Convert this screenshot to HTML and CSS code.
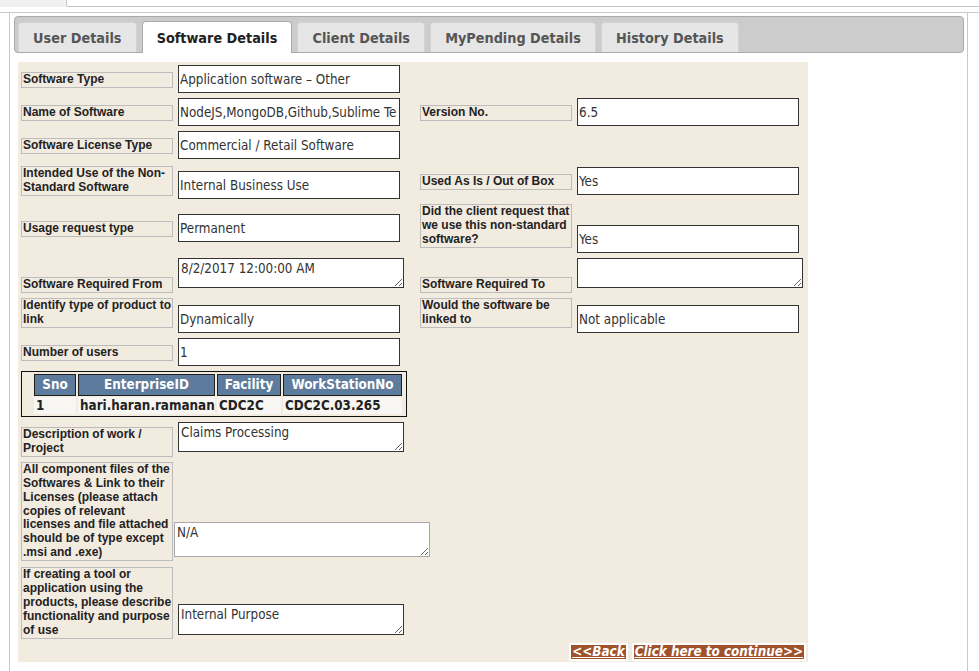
FILE: index.html
```html
<!DOCTYPE html>
<html>
<head>
<meta charset="utf-8">
<title>Software Details</title>
<link rel="stylesheet" href="styles.css">
</head>
<body>
<div class="chrome">
  <div class="chrome-left"></div>
  <div class="urlbar"></div>
</div>
<div class="frame">
  <ul class="tabs">
    <li class="tab">User Details</li>
    <li class="tab active">Software Details</li>
    <li class="tab">Client Details</li>
    <li class="tab">MyPending Details</li>
    <li class="tab">History Details</li>
  </ul>
  <div class="panel">
    <div class="grid">
      <div class="lbl m9">Software Type</div>
      <div class="fld m2">Application software – Other</div>
      <div></div><div></div>

      <div class="lbl m9">Name of Software</div>
      <div class="fld m2">NodeJS,MongoDB,Github,Sublime Te</div>
      <div class="lbl m9">Version No.</div>
      <div class="fld m2">6.5</div>

      <div class="lbl m9">Software License Type</div>
      <div class="fld m2">Commercial / Retail Software</div>
      <div></div><div></div>

      <div class="lbl m4">Intended Use of the Non-Standard Software</div>
      <div class="fld m9">Internal Business Use</div>
      <div class="lbl m12">Used As Is / Out of Box</div>
      <div class="fld m5">Yes</div>

      <div class="lbl m20">Usage request type</div>
      <div class="fld m13">Permanent</div>
      <div class="lbl m3">Did the client request that we use this non-standard software?</div>
      <div class="fld m24">Yes</div>

      <div class="lbl m21">Software Required From</div>
      <textarea class="ta m2" readonly>8/2/2017 12:00:00 AM</textarea>
      <div class="lbl m21">Software Required To</div>
      <textarea class="ta m2" readonly></textarea>

      <div class="lbl m2">Identify type of product to link</div>
      <div class="fld m9">Dynamically</div>
      <div class="lbl m2">Would the software be linked to</div>
      <div class="fld m9">Not applicable</div>

      <div class="lbl m9">Number of users</div>
      <div class="fld m2">1</div>
      <div></div><div></div>
    </div>

    <div class="users">
      <div class="ugrid">
        <div class="th">Sno</div>
        <div class="th">EnterpriseID</div>
        <div class="th">Facility</div>
        <div class="th">WorkStationNo</div>
        <div class="td">1</div>
        <div class="td">hari.haran.ramanan</div>
        <div class="td">CDC2C</div>
        <div class="td">CDC2C.03.265</div>
      </div>
    </div>

    <div class="row">
      <div class="lbl m10">Description of work / Project</div>
      <textarea class="ta m5 gap" readonly>Claims Processing</textarea>
    </div>

    <div class="row">
      <div class="lbl m5">All component files of the Softwares &amp; Link to their Licenses (please attach copies of relevant licenses and file attached should be of type except .msi and .exe)</div>
      <textarea class="ta wide end" readonly>N/A</textarea>
    </div>

    <div class="row">
      <div class="lbl m6">If creating a tool or application using the products, please describe functionality and purpose of use</div>
      <textarea class="ta tall gap end" readonly>Internal Purpose</textarea>
    </div>

    <div class="actions">
      <a class="btn" href="#">&lt;&lt;Back</a>
      <a class="btn" href="#">Click here to continue&gt;&gt;</a>
    </div>
  </div>
</div>
</body>
</html>
```

FILE: styles.css
```css
* { box-sizing: border-box; }

html, body {
  margin: 0;
  padding: 0;
  background: #ffffff;
}

body {
  font-family: "Liberation Sans", Arial, sans-serif;
  overflow: hidden;
}

/* browser strip remnant */
.chrome {
  display: flex;
  height: 13px;
  border-bottom: 1px solid #c9c9c9;
}
.chrome-left {
  width: 66px;
  height: 7px;
  background: #f1f1f1;
}
.urlbar {
  flex: 1;
  height: 7px;
  border-left: 1px solid #c4c4c4;
  border-bottom: 1px solid #c4c4c4;
  border-bottom-left-radius: 2px;
  background: #ffffff;
}

/* tab widget frame */
.frame {
  margin-left: 9px;
  width: 959px;
  height: 658px;
  border-left: 1px solid #c9c9c9;
  border-right: 1px solid #c9c9c9;
  padding: 3px 3px 0 4px;
}

.tabs {
  list-style: none;
  margin: 0;
  display: flex;
  align-items: flex-end;
  height: 37px;
  padding: 5px 0 0 3px;
  background: #cccccc;
  border: 1px solid #aaaaaa;
  border-radius: 4px;
}
.tab {
  height: 30px;
  padding: 1px 14.1px 0;
  margin-right: 5px;
  border: 1px solid #d3d3d3;
  border-bottom: 0;
  border-radius: 4px 4px 0 0;
  background: #e6e6e6;
  color: #555555;
  font-family: "DejaVu Sans Condensed", "DejaVu Sans", sans-serif;
  font-stretch: condensed;
  font-weight: bold;
  font-size: 14.3px;
  line-height: 28px;
  white-space: nowrap;
}
.tab.active {
  height: 32px;
  margin-bottom: -1px;
  background: #ffffff;
  border-color: #aaaaaa;
  color: #212121;
  line-height: 30px;
}

/* form panel */
.panel {
  margin: 9px 0 0 4px;
  width: 790px;
  height: 600px;
  background: #f2ebe0;
  padding: 1px 3px 0 3px;
}

.grid {
  display: grid;
  grid-template-columns: 152px 237px 152px 1fr;
  column-gap: 5px;
  grid-template-rows: 33px 33px 33px 39px 55px 40px 40px 33px;
  align-items: start;
}

.lbl {
  width: 152px;
  border: 1px solid #bcbcbc;
  padding: 0 0 0 1px;
  font-family: "Liberation Sans", Arial, sans-serif;
  font-weight: bold;
  font-size: 12px;
  line-height: 13.9px;
  color: #222222;
}

.fld {
  width: 222px;
  height: 28px;
  border: 1px solid #333333;
  background: #ffffff;
  padding: 0 1px;
  font-family: "DejaVu Sans Condensed", "DejaVu Sans", sans-serif;
  font-stretch: condensed;
  font-size: 13.33px;
  line-height: 27px;
  color: #333333;
  white-space: nowrap;
  overflow: hidden;
}

.ta {
  display: block;
  margin: 0;
  width: 226px;
  height: 30px;
  border: 1px solid #333333;
  border-radius: 0;
  background: #ffffff;
  padding: 2px;
  font-family: "DejaVu Sans Condensed", "DejaVu Sans", sans-serif;
  font-stretch: condensed;
  font-size: 13.33px;
  line-height: 15px;
  color: #333333;
  overflow: hidden;
  resize: both;
}
.ta.wide {
  width: 256px;
  height: 35px;
  margin-left: 1px;
  border-color: #a9a9a9;
}
.ta.tall { height: 31px; }
.ta.gap { margin-left: 5px; }
.end { align-self: flex-end; margin-bottom: 4px; }

.m2 { margin-top: 2px; }
.m3 { margin-top: 3px; }
.m4 { margin-top: 4px; }
.m5 { margin-top: 5px; }
.m6 { margin-top: 6px; }
.m9 { margin-top: 9px; }
.m10 { margin-top: 10px; }
.m12 { margin-top: 12px; }
.m13 { margin-top: 13px; }
.m20 { margin-top: 20px; }
.m21 { margin-top: 21px; }
.m24 { margin-top: 24px; }

/* users table */
.users {
  margin-top: 2px;
  width: 386px;
  border: 1px solid #111111;
  padding: 2px 1px 2px 12px;
}
.ugrid {
  display: grid;
  grid-template-columns: 42px 137px 64px 119px;
  column-gap: 2px;
  row-gap: 1px;
  font-family: "DejaVu Sans Condensed", "DejaVu Sans", sans-serif;
  font-stretch: condensed;
  font-weight: bold;
  font-size: 13.33px;
}
.th {
  height: 22px;
  line-height: 20px;
  background: #5d7b9d;
  border: 1px solid #1e1e1e;
  color: #ffffff;
  text-align: center;
  white-space: nowrap;
}
.td {
  height: 17px;
  line-height: 17px;
  background: #f8f6f2;
  color: #222222;
  padding-left: 2px;
  white-space: nowrap;
}

.row {
  display: flex;
  align-items: flex-start;
}

.actions {
  display: flex;
  justify-content: flex-end;
  gap: 4px;
  margin-top: 4px;
  margin-right: -1px;
}
.btn {
  display: block;
  border: 2px solid #ffffff;
  background: #a0522d;
  color: #ffffff;
  padding: 0 1px;
  font-family: "DejaVu Sans Condensed", "DejaVu Sans", sans-serif;
  font-stretch: condensed;
  font-weight: bold;
  font-style: italic;
  font-size: 13.33px;
  line-height: 14px;
  text-decoration: underline;
  white-space: nowrap;
}
```
